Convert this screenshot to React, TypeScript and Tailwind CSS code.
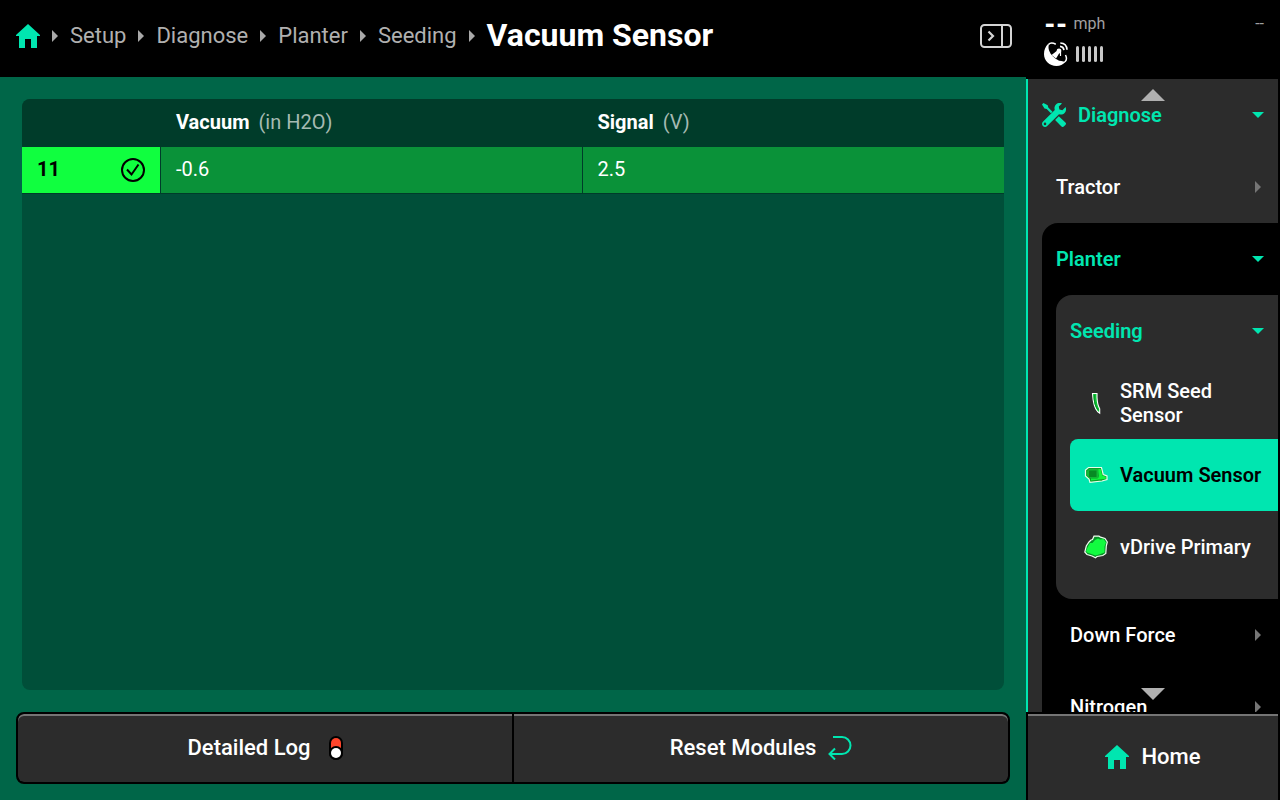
import type { ReactNode } from "react"

const crumbs = ["Setup", "Diagnose", "Planter", "Seeding"]

const rows = [{ id: "11", vacuum: "-0.6", signal: "2.5" }]

function HomeIcon() {
  return (
    <svg viewBox="0 0 24 24" className="size-6 shrink-0 text-[#00e6b0]" fill="currentColor" aria-hidden="true">
      <path d="M12 0 24 11v1h-3v12h-6v-9H9v9H3V12H0v-1z" />
    </svg>
  )
}

function ToolsIcon() {
  return (
    <svg viewBox="0 0 24 24" className="size-6 shrink-0" fill="currentColor" fillRule="evenodd" aria-hidden="true">
      <path d="M0 1.400 1.400 0l4.300 2.300.6 2.200 4.200 4.200-1.600 1.600L4.700 6.100 2.500 5.500z" />
      <path d="m16.800 13.200 6.600 6.400c.8.800.8 1.600 0 2.400l-1.600 1.500c-.8.700-1.600.7-2.300 0l-6.400-6.600z" />
      <path d="M20 .4l-3.200 3.200.6 3 3 .6L23.600 4c.9 2.600.3 4.700-1 6-1.500 1.500-3.600 1.900-5.600 1.200L5.200 23c-1.200 1.200-3.100 1.200-4.300 0s-1.200-3.100 0-4.300L12.800 7c-.7-2-.3-4.100 1.200-5.600C15.500 0 17.700-.3 20 .4zM3 19.600a1.300 1.300 0 1 0 0 2.600 1.300 1.300 0 0 0 0-2.600z" />
    </svg>
  )
}

function CrumbArrow() {
  return (
    <svg viewBox="0 0 6 12" className="w-[6px] h-3 shrink-0" fill="#a9a9a9" aria-hidden="true">
      <path d="M0 0 6 6 0 12z" />
    </svg>
  )
}

function Caret({ open = false }: { open?: boolean }) {
  return (
    <svg viewBox="0 0 12 12" className="size-3 shrink-0 ml-auto" aria-hidden="true">
      {open ? <path d="M0 3h12L6 9z" fill="#00e6b0" /> : <path d="M3 0l6 6-6 6z" fill="#757575" />}
    </svg>
  )
}

function PanelIcon() {
  return (
    <svg viewBox="0 0 32 24" className="w-8 h-6" fill="none" stroke="#d4d4d4" strokeWidth="2" aria-hidden="true">
      <rect x="1" y="1" width="30" height="22" rx="3.5" />
      <path d="M22 1v22" />
      <path d="M8.500 7.500 13 12l-4.500 4.500" strokeWidth="2.200" />
    </svg>
  )
}

function DishIcon() {
  return (
    <svg viewBox="0 0 24 24" className="size-6" fill="none" stroke="#fff" aria-hidden="true">
      <path
        d="M4 2C1.500 4.500 0 8 0 12c0 6.600 5.400 12 12.500 12 3.500 0 6.500-1.300 8.700-4C17 20 12 17.500 9 14.500 5.500 11 3.500 6 5 2.500z"
        fill="#fff"
        stroke="none"
      />
      <path d="M4.500 2.500C6 .8 9 .9 11.800 2.200M21.500 13c1.200 2.500 1.300 5-.3 6.500-1 .8-3 .8-5 0" strokeWidth="1.500" />
      <path d="M7.500 13 14 8l2 2-4 6.500z" fill="#fff" stroke="none" />
      <circle cx="15" cy="9" r="2.400" fill="#fff" stroke="none" />
      <path d="M16.500 10v4" strokeWidth="1.200" />
      <path d="M16 4.300c2.200.2 3.700 1.700 3.900 3.900M16.300 1c3.900.2 6.500 2.800 6.700 6.700" strokeWidth="1.700" />
    </svg>
  )
}

function SwitchIcon() {
  return (
    <svg viewBox="0 0 20 24" className="w-5 h-6" aria-hidden="true">
      <rect x="6" width="14" height="24" rx="7" fill="#000" />
      <rect x="8" y="2" width="10" height="20" rx="5" fill="#ff452b" />
      <circle cx="13" cy="17" r="7" fill="#000" />
      <circle cx="13" cy="17" r="5" fill="#fff" />
    </svg>
  )
}

function ResetIcon() {
  return (
    <svg viewBox="0 0 24 24" className="size-6" fill="none" stroke="#00e6b0" strokeWidth="2" aria-hidden="true">
      <path d="M5 1h9a8.500 8.500 0 0 1 0 17H1.500" />
      <path d="M7 12.500 1.500 18 7 23.500" />
    </svg>
  )
}

function SeedSensorIcon() {
  return (
    <svg viewBox="0 0 24 24" className="size-6 shrink-0" aria-hidden="true">
      <path
        d="M8.500 2.500H13v4c.2 5 1.100 8.500 2.700 11.300v4.400l-2.200-1.700C10 16.500 9 11 8.500 2.500z"
        fill="#0cc233"
        stroke="#fff"
        strokeWidth="1.100"
      />
      <path d="M10.200 3.800v4c.2 4 1.300 7.700 3.600 10.700" fill="none" stroke="#078a23" strokeWidth="1" />
    </svg>
  )
}

function VacuumIcon() {
  return (
    <svg viewBox="0 0 24 24" className="size-6 shrink-0" aria-hidden="true">
      <path d="M4.500 4.500h13l1.700 7 3.800 1.500v3.500L18 18l-12 1.300-1-3.300L1.500 13V7z" fill="#0a9c2a" stroke="#e8ffe8" strokeWidth="1.200" />
      <path d="M13.500 6h3.200l1.500 6.500 3.600 1.300v2L7 17.600v-2h6.500L15 13z" fill="#10f63c" />
      <path d="M5.500 6h9v9h-9L3 12.300V8z" fill="#11b936" />
      <rect x="5" y="7.500" width="7.500" height="6.500" fill="#078a23" />
    </svg>
  )
}

function DriveIcon() {
  return (
    <svg viewBox="0 0 24 24" className="size-6 shrink-0" aria-hidden="true">
      <path
        d="M10 1.200h5l1.500 1L21 3.500 23.300 7l-1 4-.5 7.500-3 2L13 21.500l-1.500 1.300L8 21l-5-1.500L.8 17l1.500-6L5 7l2-2 1.500-.5z"
        fill="#079027"
        stroke="#f0fff0"
        strokeWidth="1.200"
      />
      <path d="m11 5 3-1.500 2 1 3.500-.5L22 7.500l-1.500 4v6L16.500 19l-5 1.500-4-1.500L3 17.500l-1-1.500 2-4.500L6 8h2.500z" fill="#12fb40" />
    </svg>
  )
}

function MenuItem({ children, className }: { children: ReactNode; className: string }) {
  return (
    <button type="button" className={`flex w-full h-[72px] shrink-0 items-center gap-3 text-left ${className}`}>
      {children}
    </button>
  )
}

function SideMenu() {
  return (
    <nav
      aria-label="Diagnose"
      className="relative flex-1 min-h-0 overflow-hidden bg-[#2c2c2c] border-l-2 border-r-2 border-l-[#00e6b0] border-r-black text-xl font-medium text-white"
    >
      <MenuItem className="px-[14px] font-semibold text-[#00e6b0]">
        <ToolsIcon />
        Diagnose
        <Caret open />
      </MenuItem>
      <MenuItem className="pl-7 pr-[14px]">
        Tractor
        <Caret />
      </MenuItem>
      <div className="ml-[14px] rounded-tl-2xl bg-black">
        <MenuItem className="px-[14px] font-semibold text-[#00e6b0]">
          Planter
          <Caret open />
        </MenuItem>
        <div className="ml-[14px] pb-4 rounded-l-2xl bg-[#2c2c2c]">
          <MenuItem className="px-[14px] font-semibold text-[#00e6b0]">
            Seeding
            <Caret open />
          </MenuItem>
          <div className="ml-[14px]">
            <MenuItem className="px-[14px] leading-6">
              <SeedSensorIcon />
              SRM Seed Sensor
            </MenuItem>
            <MenuItem className="px-[14px] rounded-l-lg bg-[#00e6b0] font-semibold text-black">
              <VacuumIcon />
              Vacuum Sensor
            </MenuItem>
            <MenuItem className="px-[14px]">
              <DriveIcon />
              vDrive Primary
            </MenuItem>
          </div>
        </div>
        <MenuItem className="pl-7 pr-[14px]">
          Down Force
          <Caret />
        </MenuItem>
        <MenuItem className="pl-7 pr-[14px]">
          Nitrogen
          <Caret />
        </MenuItem>
      </div>
      <svg viewBox="0 0 24 12" className="absolute top-[10px] inset-x-0 mx-auto w-6 h-3" fill="#b0b0b0" aria-hidden="true">
        <path d="M12 0 24 12H0z" />
      </svg>
      <svg viewBox="0 0 24 12" className="absolute bottom-3 inset-x-0 mx-auto w-6 h-3" fill="#b0b0b0" aria-hidden="true">
        <path d="M0 0h24L12 12z" />
      </svg>
    </nav>
  )
}

export default function App() {
  return (
    <div className="flex h-screen overflow-hidden bg-black font-['Roboto',sans-serif] text-white">
      <main className="flex flex-1 min-w-0 flex-col bg-[#006648]">
        <header className="flex h-[77px] shrink-0 items-center bg-black pl-4 pr-[14px] pb-[6px]">
          <nav aria-label="Breadcrumb" className="flex items-center gap-3 text-[22px] text-[#b0b0b0]">
            <a href="#home" aria-label="Home">
              <HomeIcon />
            </a>
            {crumbs.map((crumb) => (
              <span key={crumb} className="flex items-center gap-3">
                <CrumbArrow />
                <a href={`#${crumb.toLowerCase()}`}>{crumb}</a>
              </span>
            ))}
            <CrumbArrow />
            <h1 className="pb-[2px] text-[32px] font-bold text-white whitespace-nowrap">Vacuum Sensor</h1>
          </nav>
          <button type="button" aria-label="Collapse panel" className="ml-auto">
            <PanelIcon />
          </button>
        </header>

        <section className="m-[22px] flex-1 min-h-0 overflow-hidden rounded-lg bg-[#004f39]">
          <table className="w-full table-fixed border-separate border-spacing-0 text-left text-xl">
            <colgroup>
              <col className="w-[139px]" />
              <col />
              <col />
            </colgroup>
            <thead>
              <tr className="h-12 bg-[#003c2a]">
                <td className="p-0" />
                <th className="pt-0 pb-[2px] px-[15px] font-bold">
                  Vacuum <span className="ml-1 font-normal text-[#a5bab2]">(in H2O)</span>
                </th>
                <th className="pt-0 pb-[2px] px-[15px] font-bold">
                  Signal <span className="ml-1 font-normal text-[#a5bab2]">(V)</span>
                </th>
              </tr>
            </thead>
            <tbody>
              {rows.map((row) => (
                <tr key={row.id} className="h-[47px] bg-[#0a9239]">
                  <th className="border-r border-b border-[#003c2a] bg-[#10ff3f] p-0 font-bold text-black">
                    <div className="flex items-center justify-between px-[15px]">
                      <span className="pb-[2px]">{row.id}</span>
                      <svg viewBox="0 0 24 24" className="size-6" fill="none" stroke="#000" strokeWidth="2" role="img" aria-label="OK">
                        <circle cx="12" cy="12" r="11" />
                        <path d="m6 11.500 4.500 5 7-10" />
                      </svg>
                    </div>
                  </th>
                  <td className="border-r border-b border-[#003c2a] pt-0 pb-[2px] px-[15px]">{row.vacuum}</td>
                  <td className="border-b border-[#003c2a] pt-0 pb-[2px] px-[15px]">{row.signal}</td>
                </tr>
              ))}
            </tbody>
          </table>
        </section>

        <div className="mx-4 mb-4 grid h-[72px] shrink-0 grid-cols-2 gap-[2px] overflow-hidden rounded-lg border-2 border-black bg-black text-[22px] font-medium">
          <button type="button" className="flex items-center justify-center gap-3 rounded-l-md bg-[#2c2c2c] shadow-[inset_0_2px_0_#757575]">
            <span className="pb-[2px]">Detailed Log</span>
            <SwitchIcon />
          </button>
          <button type="button" className="flex items-center justify-center gap-3 rounded-r-md bg-[#2c2c2c] shadow-[inset_0_2px_0_#757575]">
            <span className="pb-[2px]">Reset Modules</span>
            <ResetIcon />
          </button>
        </div>
      </main>

      <aside className="flex w-[254px] shrink-0 flex-col">
        <header className="flex h-[79px] shrink-0 items-start justify-between pl-[18px] pr-4 pt-3">
          <div>
            <div className="flex h-6 items-center gap-[6px]">
              <span className="text-[26px] font-black">--</span>
              <span className="text-base text-[#a0a0a0]">mph</span>
            </div>
            <div className="mt-[6px] flex items-center gap-2">
              <DishIcon />
              <div className="flex gap-[3px]">
                {[0, 1, 2, 3, 4].map((bar) => (
                  <span key={bar} className="h-4 w-[3px] rounded-sm bg-[#c8c8c8]" />
                ))}
              </div>
            </div>
          </div>
          <span className="text-base leading-6 text-[#a0a0a0]">--</span>
        </header>
        <SideMenu />
        <button
          type="button"
          className="mx-[2px] mt-[2px] flex h-[86px] shrink-0 items-center justify-center gap-3 bg-[#2c2c2c] text-[22px] font-medium shadow-[inset_0_2px_0_#757575]"
        >
          <HomeIcon />
          <span className="pb-[2px]">Home</span>
        </button>
      </aside>
    </div>
  )
}
